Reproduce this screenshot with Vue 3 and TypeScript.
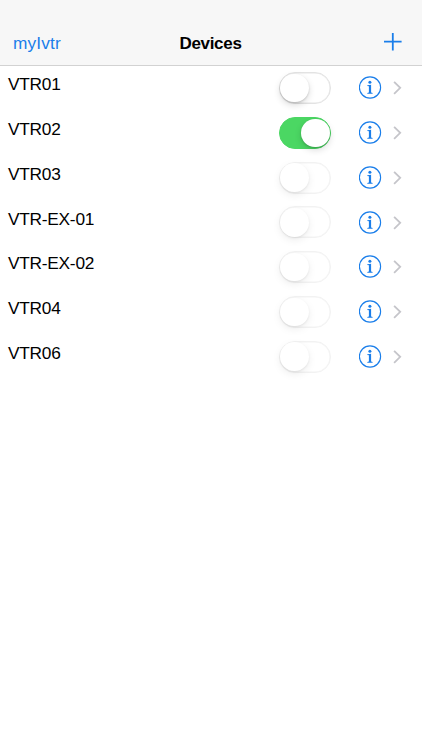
<script setup lang="ts">
import { ref } from 'vue'

interface Device {
  name: string
  on: boolean
  enabled: boolean
}

const devices = ref<Device[]>([
  { name: 'VTR01', on: false, enabled: true },
  { name: 'VTR02', on: true, enabled: true },
  { name: 'VTR03', on: false, enabled: false },
  { name: 'VTR-EX-01', on: false, enabled: false },
  { name: 'VTR-EX-02', on: false, enabled: false },
  { name: 'VTR04', on: false, enabled: false },
  { name: 'VTR06', on: false, enabled: false },
])

function toggle(device: Device) {
  device.on = !device.on
}
</script>

<template>
  <main class="screen">
    <header class="bar">
      <button class="back">myIvtr</button>
      <h1 class="title">Devices</h1>
      <button class="add" aria-label="Add">
        <svg width="18" height="18" viewBox="0 0 18 18">
          <path d="M0 8.7H17.6M8.8 0V17.6" fill="none" stroke="#1a7eea" stroke-width="1.8" />
        </svg>
      </button>
    </header>
    <ul class="list">
      <li v-for="device in devices" :key="device.name" class="row">
        <span class="name">{{ device.name }}</span>
        <button
          class="switch"
          :class="{ on: device.on, disabled: !device.enabled }"
          role="switch"
          :aria-checked="device.on"
          :aria-label="device.name"
          :disabled="!device.enabled"
          @click="toggle(device)"
        >
          <span class="knob"></span>
        </button>
        <svg class="info" width="23" height="23" viewBox="0 0 23 23">
          <circle cx="11" cy="11.5" r="10.6" fill="none" stroke="#1a7eea" stroke-width="1.15" />
          <circle cx="10.9" cy="6.2" r="1.5" fill="#1a7eea" />
          <path d="M8.3 9.2L12.1 8.7V16.5L13.6 17V17.8H8.3V17L9.9 16.5V10.2L8.3 9.9Z" fill="#1a7eea" />
        </svg>
        <svg class="chevron" width="9" height="14" viewBox="0 0 9 14">
          <path d="M1.1 0.8L7.2 6.8L1.1 12.8" fill="none" stroke="#c5c5ca" stroke-width="1.8" />
        </svg>
      </li>
    </ul>
  </main>
</template>

<style>
body {
  margin: 0;
  background: #fff;
}
</style>

<style scoped>
.screen {
  min-height: 750px;
  background: #fff;
  color: #000;
  font-family: "Liberation Sans", Arial, sans-serif;
  font-size: 17.3px;
}

button {
  margin: 0;
  padding: 0;
  border: 0;
  background: none;
  font: inherit;
}

.bar {
  box-sizing: border-box;
  display: grid;
  grid-template-columns: 1fr auto 1fr;
  align-items: center;
  height: 66px;
  padding: 20px 20px 0 13px;
  border-bottom: 1px solid #d2d2d2;
  background: #f7f7f7;
}

.back {
  justify-self: start;
  color: #1a7eea;
  line-height: 20px;
  letter-spacing: 0.15px;
}

.title {
  margin: 0;
  padding: 2px 0 0 6px;
  font-size: 17px;
  font-weight: 700;
  line-height: 20px;
  letter-spacing: -0.3px;
}

.add {
  justify-self: end;
  height: 18px;
  margin-bottom: 2px;
}

.add svg {
  display: block;
}

.list {
  margin: 0;
  padding: 0;
  list-style: none;
}

.row {
  box-sizing: border-box;
  display: flex;
  align-items: center;
  height: 44.78px;
  padding: 0 20px 0 8px;
}

.name {
  flex: 1;
  line-height: 20px;
  padding-bottom: 8px;
  letter-spacing: -0.25px;
}

.switch {
  box-sizing: border-box;
  display: flex;
  align-items: center;
  width: 52px;
  height: 32px;
  margin-bottom: 0.5px;
  border: 1.6px solid #e3e3e3;
  border-radius: 16px;
}

.switch:not(.on) {
  box-shadow: inset 0 0 0 0.5px #e6e6e6;
}

.knob {
  width: 28.5px;
  height: 28.5px;
  border-radius: 50%;
  background: #fff;
  box-shadow: 0 3px 7px rgba(0, 0, 0, 0.14), 0 1px 2px rgba(0, 0, 0, 0.16);
}

.switch.on {
  justify-content: flex-end;
  border-color: #4bd763;
  background: #4bd763;
}

.switch.on .knob {
  margin-right: 0.5px;
}

.switch.disabled {
  opacity: 0.45;
}

.info {
  margin: 0 0 1px 27.5px;
}

.chevron {
  margin-left: 11.5px;
}
</style>
